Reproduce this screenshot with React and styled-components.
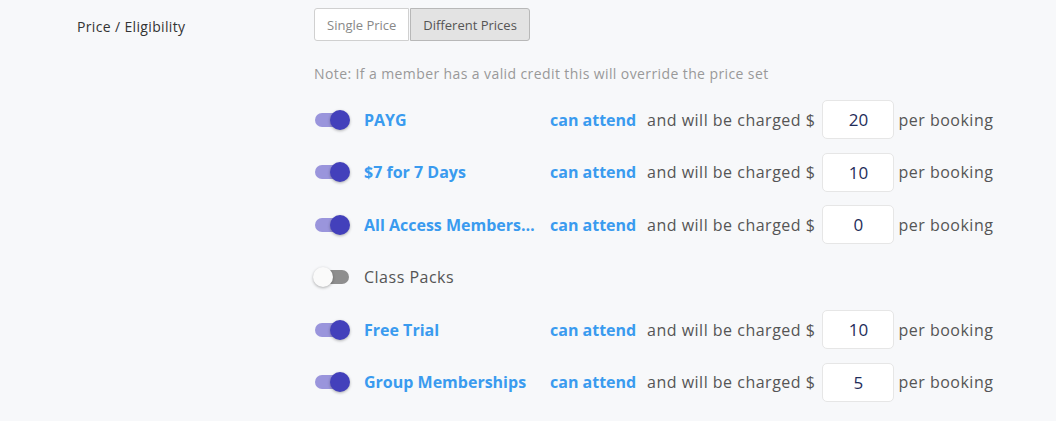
import React from "react";
import styled, { createGlobalStyle } from "styled-components";

const Global = createGlobalStyle`
  html, body { margin: 0; padding: 0; background: #f7f8fa; }
  body { font-family: "Open Sans", "Liberation Sans", sans-serif; -webkit-font-smoothing: antialiased; }
`;

const Page = styled.div`
  display: grid;
  grid-template-columns: 237px 1fr;
  padding: 8px 0 0 77px;
  width: 1056px;
  height: 421px;
  box-sizing: border-box;
`;

const Label = styled.div`
  font-size: 14px;
  letter-spacing: 0.35px;
  color: #333;
  line-height: 20px;
  padding-top: 9px;
`;

const Content = styled.div`
  display: flex;
  flex-direction: column;
`;

const Segmented = styled.div`
  display: flex;
`;

const SegButton = styled.button`
  font-family: inherit;
  font-size: 13px;
  height: 33px;
  padding: 0 12px;
  border: 1px solid ${(p) => (p.$active ? "#b8b8b8" : "#d0d0d0")};
  background: ${(p) => (p.$active ? "#e3e3e3" : "#fff")};
  color: ${(p) => (p.$active ? "#555" : "#888")};
  border-radius: ${(p) => (p.$first ? "3px 0 0 3px" : "0 3px 3px 0")};
  margin-left: ${(p) => (p.$first ? "0" : "1px")};
  cursor: pointer;
`;

const Note = styled.div`
  font-size: 14px;
  letter-spacing: 0.4px;
  color: #999;
  margin-top: 23px;
  line-height: 20px;
`;

const Rows = styled.div`
  display: flex;
  flex-direction: column;
  gap: 13.6px;
  margin-top: 16px;
`;

const Row = styled.div`
  display: flex;
  align-items: center;
  height: 39px;
`;

const Toggle = styled.span`
  position: relative;
  width: 34px;
  height: 14px;
  border-radius: 7px;
  margin-left: 1px;
  background: ${(p) => (p.$on ? "#9a95dc" : "#8e8e8e")};
  flex: none;
`;

const Knob = styled.span`
  position: absolute;
  top: -3px;
  left: ${(p) => (p.$on ? "15px" : "-2px")};
  width: 20px;
  height: 20px;
  border-radius: 50%;
  background: ${(p) => (p.$on ? "#4340bb" : "#fafafa")};
  box-shadow: 0 1px 3px rgba(0, 0, 0, 0.3);
`;

const Name = styled.span`
  margin-left: 15px;
  width: 181px;
  padding-right: 5px;
  font-size: 16px;
  font-weight: ${(p) => (p.$on ? 700 : 400)};
  letter-spacing: ${(p) => (p.$on ? "0" : "0.5px")};
  color: ${(p) => (p.$on ? "#3a9bef" : "#555")};
  white-space: nowrap;
  overflow: hidden;
  text-overflow: ellipsis;
  flex: none;
`;

const Attend = styled.span`
  font-size: 16px;
  font-weight: 700;
  color: #3a9bef;
  width: 97px;
  flex: none;
`;

const Text = styled.span`
  font-size: 16px;
  letter-spacing: 0.5px;
  color: #555;
  white-space: nowrap;
`;

const PriceInput = styled.input`
  font-family: inherit;
  width: 72px;
  height: 39px;
  box-sizing: border-box;
  margin: 0 4px 0 7px;
  border: 1px solid #e6e6e6;
  border-radius: 5px;
  background: #fff;
  color: #1f2d5a;
  font-size: 17px;
  text-align: center;
  outline: none;
`;

const items = [
  { name: "PAYG", on: true, price: "20" },
  { name: "$7 for 7 Days", on: true, price: "10" },
  { name: "All Access Memberships", on: true, price: "0" },
  { name: "Class Packs", on: false },
  { name: "Free Trial", on: true, price: "10" },
  { name: "Group Memberships", on: true, price: "5" },
];

export default function App() {
  return (
    <>
      <Global />
      <Page>
        <Label>Price / Eligibility</Label>
        <Content>
          <Segmented>
            <SegButton $first>Single Price</SegButton>
            <SegButton $active>Different Prices</SegButton>
          </Segmented>
          <Note>Note: If a member has a valid credit this will override the price set</Note>
          <Rows>
            {items.map((it) => (
              <Row key={it.name}>
                <Toggle $on={it.on}>
                  <Knob $on={it.on} />
                </Toggle>
                <Name $on={it.on}>{it.name}</Name>
                {it.on && (
                  <>
                    <Attend>can attend</Attend>
                    <Text>and will be charged $</Text>
                    <PriceInput defaultValue={it.price} />
                    <Text>per booking</Text>
                  </>
                )}
              </Row>
            ))}
          </Rows>
        </Content>
      </Page>
    </>
  );
}
